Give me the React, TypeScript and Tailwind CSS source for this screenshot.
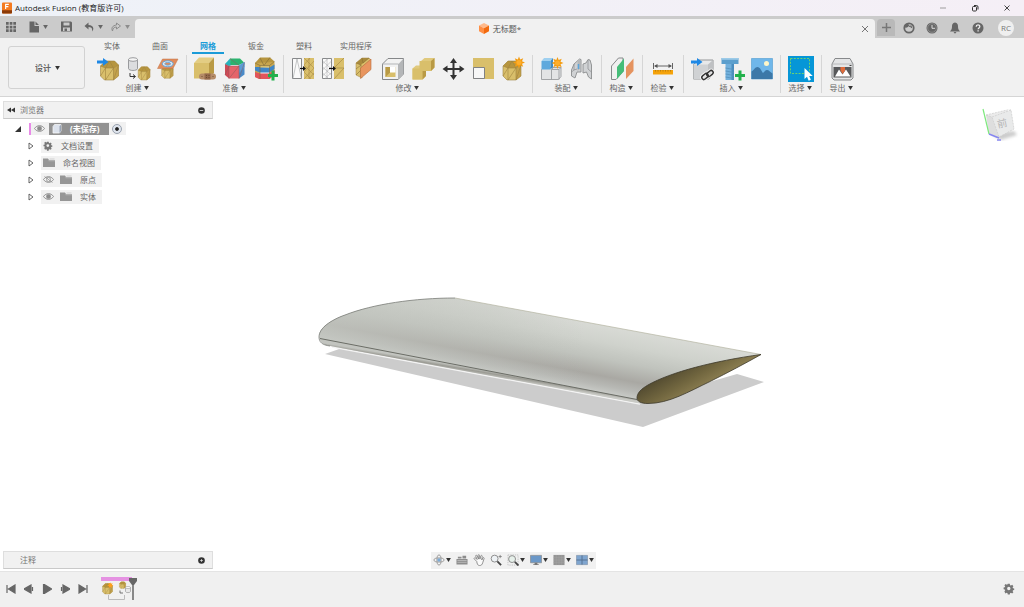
import type { ReactNode } from 'react';

const GOLD = '#d9bf6b';
const GOLD_DARK = '#b99a45';
const GOLD_LINE = '#a08340';

function Caret({ className = '' }: { className?: string }) {
  return (
    <svg viewBox="0 0 6 5" className={`h-1 w-[5px] shrink-0 ${className}`} aria-hidden="true">
      <path d="M0 0h6L3 5z" fill="currentColor" />
    </svg>
  );
}

function Icon({ children, className = 'size-[26px]' }: { children: ReactNode; className?: string }) {
  return (
    <svg viewBox="0 0 26 26" className={`block shrink-0 ${className}`} fill="none" aria-hidden="true">
      {children}
    </svg>
  );
}

/* faceted solid, drawn in a 20x20 box */
function Mesh({ t = '' }: { t?: string }) {
  return (
    <g transform={t} strokeLinejoin="round">
      <path d="M1 6 6 1h9l4 4v11l-5 4H5l-4-4z" fill={GOLD} />
      <path d="M1 6 6 1h9l4 4-5 3H6z" fill="#b6953f" />
      <path d="m14 8 5-3v11l-5 4z" fill="#c3a24c" />
      <path
        d="M1 6 6 1h9l4 4v11l-5 4H5l-4-4zM1 6l5 2h8l5-3M6 8v12M14 8v12M6 8 10 1l4 7M1 16l5-8M6 20l8-12M14 20l5-15"
        stroke={GOLD_LINE}
        strokeWidth=".6"
      />
    </g>
  );
}

function Star({ x, y }: { x: number; y: number }) {
  return (
    <g transform={`translate(${x} ${y})`}>
      <path
        d="m0-6 1.200 3 3-1.200L3-1.200 6 0 3 1.200l1.200 3-3-1.200L0 6l-1.200-3-3 1.200 1.200-3L-6 0l3-1.200-1.200-3 3 1.200z"
        fill="#f39c12"
      />
      <circle r="2.500" fill="#ffae2b" />
    </g>
  );
}

const BlueArrow = () => <path d="M2 4.500h6V2l5.500 4L8 10V7.500H2z" fill="#1e88e5" />;
const GreenPlus = () => <path d="M19.500 14.500h3v3.500H26v3h-3.500v3.500h-3V21H16v-3h3.500z" fill="#22b14c" />;

const createIcons = [
  {
    name: '插入网格',
    art: (
      <>
        <Mesh t="translate(4.500 4)" />
        <BlueArrow />
      </>
    ),
  },
  {
    name: '曲面细分',
    art: (
      <>
        <path d="M3.500 3.500v9c0 2.600 9 2.600 9 0v-9" fill="#dcdddf" stroke="#858789" strokeWidth=".8" />
        <ellipse cx="8" cy="3.500" rx="4.500" ry="1.800" fill="#f5f5f5" stroke="#858789" strokeWidth=".8" />
        <path d="M5 17v3.500h5M8 18.500l2.500 2L8 22.500" stroke="#333" strokeWidth="1" />
        <Mesh t="translate(12.500 10) scale(.66 .7)" />
      </>
    ),
  },
  {
    name: '网格截面草图',
    art: (
      <>
        <Mesh t="translate(6 9.500) scale(.64)" />
        <path d="m2.500 12.500 5-9.500h15.500l-5 9.500z" fill="#e08c5c" stroke="#c27244" strokeWidth=".5" />
        <ellipse cx="12.700" cy="7.800" rx="5.500" ry="3" fill="#dfe9f2" stroke="#5fa5dc" strokeWidth="1" />
        <ellipse cx="12.700" cy="7.800" rx="3" ry="1.400" fill="#e08c5c" stroke="#5fa5dc" strokeWidth=".8" />
      </>
    ),
  },
];

const prepareIcons = [
  {
    name: '修复',
    art: (
      <>
        <path d="M2 7h15v15.500H2z" fill={GOLD} />
        <path d="m2 7 5-5.500h15L17 7z" fill="#e3cd83" />
        <path d="m17 7 5-5.500V17l-5 5.500z" fill={GOLD_DARK} />
        <rect x="7" y="17.500" width="17" height="6" rx="3" fill="#b58c68" />
        <rect x="12.500" y="17.500" width="6" height="6" fill="#94694a" />
        <path d="M9.500 20.500h1M20.500 20.500h1M14 19.500h1M16.500 19.500h1M14 21.500h1M16.500 21.500h1" stroke="#5f432a" strokeWidth=".8" />
      </>
    ),
  },
  {
    name: '生成面组',
    art: (
      <>
        <path d="M3 8v11l4 3.500V10z" fill="#cf4a56" />
        <path d="M3 8 8 2.500 9.500 9 7 10z" fill="#27b3bd" />
        <path d="M8 2.500h10l4 4-5 2.500H8.500z" fill="#2bb36f" />
        <path d="M7 10h10v12.500H7z" fill="#e5646a" />
        <path d="m17 9.500 5.500-3.500v12.500l-5.500 4z" fill="#4a8ac8" />
        <path d="m17 9.500 5.500-3.500v5L17 17z" fill="#5b9bd5" />
        <path d="m7 22.500 10-12.500M3 19l4-9M8 2.500l9 7M17 22.500l5.500-16M3 8l4 2h10v12.500M7 10v12.500" stroke="#8a5a5c" strokeWidth=".5" />
      </>
    ),
  },
  {
    name: '合并面组',
    art: (
      <>
        <path d="m3 7 5-5.500h10l4.500 4-5 4H8z" fill="#b6953f" />
        <path d="M3 7v14l5 2V9.500h9.500v13.500l5-4v-13z" fill="#c8a64e" />
        <path d="M3 11h5l9.500.5 5-3v4.500l-5 3.500H8l-5-2z" fill="#3f86c7" />
        <path d="m3 16 5 1.500h9.500l5-3.500v4.500l-5 4.500H7l-4-2z" fill="#e2555c" />
        <path d="M8 9.500h9.500v2H8z" fill={GOLD} />
        <path d="m3 7 5 2.500h9.500l5-4M8 2l4 7.500 6-8M8 9.500V23M17.500 9.500V22" stroke="#806a35" strokeWidth=".6" />
        <GreenPlus />
      </>
    ),
  },
];

const modifyIcons = [
  {
    name: '重新划分网格',
    art: (
      <>
        <path d="M2.500 2.500h9v20h-9z" fill="#fafafa" stroke="#87898b" strokeWidth="1" />
        <path d="M3 22.500 7 3l4.500 19.500" stroke="#a0a2a4" strokeWidth=".6" />
        <path d="M14 2h10v21H14z" fill={GOLD} />
        <path d="M14 9 20 2M14 16 24 5M14 23l10-11M19 23l5-6M14 2l10 10M14 9l10 10M14 16l7 7M19 2v21" stroke={GOLD_LINE} strokeWidth=".5" />
        <path d="M10 12.500h4" stroke="#111" strokeWidth="1.200" />
        <path d="m13 10 3 2.500L13 15z" fill="#111" />
      </>
    ),
  },
  {
    name: '简化',
    art: (
      <>
        <path d="M2.500 2.500h9v20h-9z" fill="#fafafa" stroke="#87898b" strokeWidth="1" />
        <path d="M2.500 8 8 2.500M2.500 14l9-9M2.500 20l9-9M5 22.500l6.500-6M2.500 5l9 8M2.500 11l9 8M2.500 17l6 5.500M7 2.500v20" stroke="#a0a2a4" strokeWidth=".5" />
        <path d="M14 2h10v21H14z" fill={GOLD} />
        <path d="M14 12 24 2M14 12h10L14 23" stroke={GOLD_LINE} strokeWidth=".6" />
        <path d="M9 12.500h5" stroke="#111" strokeWidth="1.200" />
        <path d="m13 10 3 2.500L13 15z" fill="#111" />
      </>
    ),
  },
  {
    name: '平面剪切',
    art: (
      <>
        <path d="m6 7 6-5h7l2 2-9 7v11l-6-3z" fill={GOLD} stroke={GOLD_LINE} strokeWidth=".5" />
        <path d="m6 7 6-5h7l-8 7z" fill="#a88a3d" />
        <path d="m6 7 5 2v12M6 13l5-4M6 19l5-5M12 2l1 5 6-5" stroke="#8a7136" strokeWidth=".6" />
        <path d="m10.500 12 10.500-9v10.500l-10.500 9z" fill="#e8955f" stroke="#b96d3e" strokeWidth=".6" />
      </>
    ),
  },
  {
    name: '抽壳',
    art: (
      <>
        <path d="M2.500 8 8 2.500h15.500V18L18 23.500H2.500z" fill="#f2f2f2" stroke="#858789" strokeWidth="1" />
        <path d="m18.500 8 5-5.500V18l-5 5.500z" fill="#b4b6b8" />
        <path d="M2.500 8h16v15.500" stroke="#b3b5b7" strokeWidth="1" />
        <path d="M5.500 11h10v10h-10z" fill={GOLD} />
        <path d="M10 11h5.500v5.500H10z" fill="#fff" />
        <path d="M5.500 11H10v5.500L5.500 21z" fill={GOLD_DARK} />
      </>
    ),
  },
  {
    name: '合并',
    art: (
      <>
        <path d="M2.500 12.500 6 9.500h5V5l3.500-3h10v9.500L21 15h-5v5l-3.500 3.500h-10z" fill="#e0c97d" />
        <path d="M2.500 12.500h7V5H21v10h-8.500v8.500h-10z" fill={GOLD} />
        <path d="m21 5 3.500-3v9.500L21 15zM12.500 15H16v5l-3.500 3.500z" fill={GOLD_DARK} />
      </>
    ),
  },
  {
    name: '移动/复制',
    art: (
      <>
        <path d="M13.500 5v16M5 13h17" stroke="#333" strokeWidth="2" />
        <path d="m13.500 2 3.500 5h-7zM13.500 24l3.500-5h-7zM2.500 13l5-3.500v7zM24.500 13l-5-3.500v7z" fill="#333" />
      </>
    ),
  },
  {
    name: '缩放',
    art: (
      <>
        <path d="M3 2h21v21H3z" fill={GOLD} />
        <path d="M3.500 11.500h11v11h-11z" fill="#f7f7f7" stroke="#808285" strokeWidth="1" />
      </>
    ),
  },
  {
    name: '转换网格',
    art: (
      <>
        <Mesh t="translate(2 4)" />
        <Star x={19} y={6.500} />
      </>
    ),
  },
];

const assembleIcons = [
  {
    name: '新建零部件',
    art: (
      <>
        <path d="m2.500 13.500 2-2H22v9L19.500 23.500h-17z" fill="#e3e4e5" stroke="#9b9d9f" strokeWidth=".9" />
        <path d="M12.500 13.500h7.500v10M12.500 13.500v10M20 13.500l2-2M12.500 13.500l2-2" stroke="#9b9d9f" strokeWidth=".9" />
        <path d="M2.500 5h9v8.500h-9z" fill="#5fa9dd" />
        <path d="m2.500 5 2.500-3h9l-2.500 3z" fill="#9fd0f0" />
        <path d="m11.500 5 2.500-3v9l-2.500 2.500z" fill="#3f8bc4" />
        <Star x={18.500} y={7} />
      </>
    ),
  },
  {
    name: '联接',
    art: (
      <>
        <path d="M2.500 14 5 8l5.500-5 1.500.5V16h-4L6 22l-3.500-2z" fill="#d0d2d4" stroke="#8b8d8f" strokeWidth=".9" />
        <path d="M5 8v6l-2.500 2M5 14l3-1" stroke="#8b8d8f" strokeWidth=".7" />
        <path d="M8.500 5.500V15l2.500-2V3.500z" fill="#b5b8ba" />
        <path d="m14 8 3-1 2-3.500 2 .5 1.500 5v14l-3-2-2-5-3.500 1z" fill="#d0d2d4" stroke="#8b8d8f" strokeWidth=".9" />
        <path d="M19 4v9l3.500 3" stroke="#8b8d8f" strokeWidth=".7" />
        <path d="M9.500 8v5" stroke="#5aa6dd" strokeWidth="1.500" />
      </>
    ),
  },
];

const constructIcons = [
  {
    name: '偏移平面',
    art: (
      <>
        <path d="m2.500 10 7-8H14v13.500L7 23.500H2.500z" fill="#f0f0f0" stroke="#87898b" strokeWidth="1" />
        <path d="m8 11 7-8.500v12.500l-7 8z" fill="#45bd78" />
        <path d="m17 11 7.500-8.500v12.500L17 23z" fill="#e5935f" />
      </>
    ),
  },
];

const inspectIcons = [
  {
    name: '测量',
    art: (
      <>
        <path d="M3.500 7v6M22.500 7v6M5 10h16" stroke="#555" strokeWidth=".9" />
        <path d="m4 10 3.500-2v4zM22 10l-3.500-2v4z" fill="#555" />
        <path d="M3 14h20v4.500H3z" fill="#f5a30a" />
        <path d="M5.500 14v1.500M8 14v1.500M10.500 14v1.500M13 14v1.500M15.500 14v1.500M18 14v1.500M20.500 14v1.500" stroke="#a8700d" strokeWidth=".7" />
      </>
    ),
  },
];

const insertIcons = [
  {
    name: '插入衍生',
    art: (
      <>
        <path d="m4.500 8.500 5-4.500H24v14l-4 5H4.500z" fill="#e8e9ea" stroke="#8b8d8f" strokeWidth=".9" />
        <path d="M4.500 8.500H19V23H4.500z" fill="#d0d2d4" />
        <path d="m19 8.500 5-4.500v14l-5 5z" fill="#bfc1c3" />
        <BlueArrow />
        <g stroke="#f1f1f1" strokeWidth="3.500">
          <rect x="12.500" y="18.500" width="7" height="4" rx="2" transform="rotate(-40 16 20.500)" />
          <rect x="17.500" y="15.500" width="7" height="4" rx="2" transform="rotate(-40 21 17.500)" />
        </g>
        <g stroke="#333" strokeWidth="1.500">
          <rect x="12.500" y="18.500" width="7" height="4" rx="2" transform="rotate(-40 16 20.500)" />
          <rect x="17.500" y="15.500" width="7" height="4" rx="2" transform="rotate(-40 21 17.500)" />
        </g>
      </>
    ),
  },
  {
    name: '插入紧固件',
    art: (
      <>
        <path d="M2.500 2h17v6h-17z" fill="#5c9fcd" />
        <path d="M2.500 2h17v1.800h-17z" fill="#9ccbe8" />
        <path d="M6.500 8H15v16H6.500z" fill="#72b0dc" />
        <path d="M12.500 8H15v16h-2.500z" fill="#4a8dbf" />
        <path d="m6.500 12 8.500 1.500M6.500 15l8.500 1.500M6.500 18l8.500 1.500M6.500 21l8.500 1.500" stroke="#5592bd" strokeWidth=".8" />
        <GreenPlus />
      </>
    ),
  },
  {
    name: '贴图',
    art: (
      <>
        <path d="M2.500 2.500h21v20.500h-21z" fill="#6fb7ea" stroke="#4d9bd0" strokeWidth=".6" />
        <circle cx="17.500" cy="7.500" r="2.500" fill="#fdf6c9" />
        <path d="M2.500 15.500C5 14 6 11 8.500 11s4 4 5.500 6c1.500-1 2-3 4-3s3 2 5.500 3.500V23h-21z" fill="#3c78a8" />
      </>
    ),
  },
];

const selectIcons = [
  {
    name: '选择',
    art: (
      <>
        <path d="M0 0h26v26H0z" fill="#0696d7" />
        <path d="M2.500 2.500h19v15h-19z" stroke="#6fd26f" strokeWidth="1" strokeDasharray="2 1.300" />
        <path d="M16.500 12v11l2.500-2.300 1.700 4 2.200-1-1.700-3.800h3.500z" fill="#fff" />
      </>
    ),
  },
];

const exportIcons = [
  {
    name: '3D 打印',
    art: (
      <>
        <path d="m3 8 3-5.500h15L24 8v14l-2 2H5l-2-2z" fill="#e4e5e6" stroke="#87898b" strokeWidth="1" />
        <path d="M3 8h21" stroke="#acaeb0" strokeWidth=".8" />
        <path d="M4.500 11h18v10.500h-18z" fill="#58595b" />
        <path d="m6 20.500 4-7 3.500 5 3.500-5 4.500 7z" fill="#fff" />
        <path d="M11.500 11h4.500v3.500L13.700 18l-2.200-3.500z" fill="#df6c3c" />
        <path d="M20.500 9.500h2" stroke="#333" strokeWidth=".9" />
      </>
    ),
  },
];

const groups = [
  { label: '创建', icons: createIcons },
  { label: '准备', icons: prepareIcons },
  { label: '修改', icons: modifyIcons },
  { label: '装配', icons: assembleIcons },
  { label: '构造', icons: constructIcons },
  { label: '检验', icons: inspectIcons },
  { label: '插入', icons: insertIcons },
  { label: '选择', icons: selectIcons },
  { label: '导出', icons: exportIcons },
];

const tabs = ['实体', '曲面', '网格', '钣金', '塑料', '实用程序'];

const gearPath =
  'M10.500 2h5l.7 3.400 2.300 1 3-1.900 3 3.500-1.900 2.800.9 2.200 3 .5v4l-3 .6-.9 2.300 1.900 2.900-3.200 3.200-2.900-1.900-2.300.9-.6 3.500h-5l-.7-3.500-2.300-.9-2.900 1.900L2 21.300l1.900-2.900-1-2.300L0 15.500v-4l2.900-.6 1-2.300L2 5.700 5.200 2.500l2.900 1.900 2-1z M13 9.500a4.200 4.200 0 1 0 0 8.400 4.200 4.200 0 0 0 0-8.400z';

function Gear({ className }: { className?: string }) {
  return (
    <svg viewBox="-1 0 29 30" className={className} fill="currentColor" fillRule="evenodd" aria-hidden="true">
      <path d={gearPath} />
    </svg>
  );
}

function Eye({ off = false }: { off?: boolean }) {
  return (
    <svg viewBox="0 0 22 14" className="h-[7px] w-[11px] shrink-0" fill="none" aria-hidden="true">
      <path d="M1 7c5-7.500 15-7.500 20 0-5 7.500-15 7.500-20 0z" stroke="#8c8c8c" strokeWidth="2" />
      <circle cx="11" cy="7" r="4" fill={off ? 'none' : '#8c8c8c'} stroke="#8c8c8c" strokeWidth="1.500" />
      {off && <path d="m3 1 16 12" stroke="#8c8c8c" strokeWidth="1.500" />}
    </svg>
  );
}

function Folder() {
  return (
    <svg viewBox="0 0 24 18" className="h-[9px] w-3 shrink-0" aria-hidden="true">
      <path d="M0 1h10l2 3h12v14H0z" fill="#969696" />
      <path d="M11 5.500h13M13 2h10" stroke="#c4c4c4" strokeWidth="1.500" />
    </svg>
  );
}

function TitleBar() {
  return (
    <header className="flex h-4 shrink-0 items-center bg-gradient-to-r from-[#eef2f8] to-[#f5eff6] text-[#222]">
      <svg viewBox="0 0 22 24" className="ml-[2px] h-3 w-[10px]" aria-hidden="true">
        <rect width="22" height="24" rx="2" fill="#f47a20" />
        <path d="M0 17h22v5a2 2 0 0 1-2 2H2a2 2 0 0 1-2-2z" fill="#8a3a08" />
        <path d="M8 14V4h7M8 9h6" fill="none" stroke="#fff" strokeWidth="2.500" />
      </svg>
      <h1 className="ml-[3px] text-[8px]">Autodesk Fusion (教育版许可)</h1>
      <div className="ml-auto flex items-center pr-[13px] text-[#333]">
        <button aria-label="最小化" className="mr-6">
          <svg viewBox="0 0 8 8" className="size-2"><path d="M1 4h6" stroke="#888" strokeWidth=".8" /></svg>
        </button>
        <button aria-label="还原" className="mr-6">
          <svg viewBox="0 0 8 8" className="size-2" fill="none" stroke="currentColor">
            <rect x="1.500" y="2.500" width="4" height="4.500" rx="1" />
            <path d="M3 1.500h2.500a1.500 1.500 0 0 1 1.500 1.500v2.500" />
          </svg>
        </button>
        <button aria-label="关闭窗口">
          <svg viewBox="0 0 8 8" className="size-2"><path d="m1.500 1.500 5 5m0-5-5 5" stroke="currentColor" strokeWidth=".9" /></svg>
        </button>
      </div>
    </header>
  );
}

function DocumentBar() {
  return (
    <div className="flex h-[22px] shrink-0 bg-[#cbcbcb] pt-[3px] text-[#666]">
      <div className="flex w-[135px] shrink-0 items-center pb-1 pl-1.5">
        <button aria-label="数据面板">
          <svg viewBox="0 0 10 10" className="size-[10px]" fill="currentColor">
            <path d="M0 0h2.700v2.700H0zM3.700 0h2.700v2.700H3.700zM7.300 0H10v2.700H7.300zM0 3.700h2.700v2.700H0zM3.700 3.700h2.700v2.700H3.700zM7.300 3.700H10v2.700H7.300zM0 7.300h2.700V10H0zM3.700 7.300h2.700V10H3.700zM7.300 7.300H10V10H7.300z" />
          </svg>
        </button>
        <button aria-label="文件" className="ml-[13px] flex items-center gap-1">
          <svg viewBox="0 0 10 12" className="h-3 w-[10px]" fill="currentColor"><path d="M.5.500h5V5H10v6.500H.500zM6.500.500 10 4H6.500z" /></svg>
          <Caret />
        </button>
        <button aria-label="保存" className="ml-[13px]">
          <svg viewBox="0 0 11 11" className="size-[11px]" fill="currentColor" fillRule="evenodd">
            <path d="M0 .500h10L11 1.500v9H0zM2.500 1.500v3h6v-3zM2 6.500V10h7V6.500zM3.500 7.500H6V10H3.500z" />
          </svg>
        </button>
        <button aria-label="撤消" className="ml-3 flex items-center gap-1">
          <svg viewBox="0 0 10 10" className="size-[10px]"><path d="M4.500.500.500 4l4 3.500V5c3 0 4 1 3.500 4.500C11 6 8.500 3 4.500 3z" fill="currentColor" /></svg>
          <Caret />
        </button>
        <button aria-label="重做" className="ml-2 flex items-center gap-1 text-[#8d8d8d]">
          <svg viewBox="0 0 10 10" className="size-[10px]"><path d="m5.500 1 4 3-4 3V5C3 5 2 6 1.500 9 0 6 1.500 3.500 5.500 3z" fill="none" stroke="currentColor" /></svg>
          <Caret />
        </button>
      </div>
      <div className="flex flex-1 items-center rounded-t bg-[#f1f1f1]">
        <div className="flex flex-1 items-center justify-center gap-1 pl-1 text-[8px] text-[#555]">
          <svg viewBox="0 0 20 22" className="h-[11px] w-[10px]" aria-hidden="true">
            <path d="m10 0 10 5-10 5.500L0 5z" fill="#ffb98a" />
            <path d="m0 5 10 5.500V22L0 16.500z" fill="#ff8f45" />
            <path d="m20 5-10 5.500V22l10-5.500z" fill="#f26a0e" />
          </svg>
          <span>无标题*</span>
        </div>
        <button aria-label="关闭文档" className="mr-1.5">
          <svg viewBox="0 0 8 8" className="size-2"><path d="m1 1 6 6m0-6-6 6" stroke="currentColor" strokeWidth=".9" /></svg>
        </button>
      </div>
      <div className="flex w-[149px] shrink-0 items-center pb-0.5">
        <button aria-label="新建设计" className="ml-0.5 flex h-full w-[18px] items-center justify-center rounded-t bg-[#b9b9b9]">
          <svg viewBox="0 0 9 9" className="size-[9px]"><path d="M4.500 0v9M0 4.500h9" stroke="#777" strokeWidth="1.500" /></svg>
        </button>
        <button aria-label="扩展" className="ml-2">
          <svg viewBox="0 0 12 12" className="size-3" fill="none">
            <circle cx="6" cy="6" r="4.700" stroke="currentColor" strokeWidth="1.800" />
            <path d="M1.500 3 4 1.500 6.500 3 5 5 2.500 6z" fill="currentColor" />
            <path d="m6 4.500 2-.5.5 2" stroke="currentColor" strokeWidth="1.200" />
          </svg>
        </button>
        <button aria-label="作业状态" className="ml-[11px]">
          <svg viewBox="0 0 12 12" className="size-3" fill="none">
            <circle cx="6" cy="6" r="5.500" fill="currentColor" />
            <circle cx="6" cy="6" r="4.300" stroke="#aaa" strokeWidth=".5" />
            <path d="M6 3v3.300h3" stroke="#ddd" strokeWidth="1" />
          </svg>
        </button>
        <button aria-label="通知" className="ml-[11px]">
          <svg viewBox="0 0 12 12" className="size-3" fill="currentColor"><path d="M6 .500c-2.500.5-3 2-3 4 0 2.500-.5 3-2 5h10c-1.500-2-2-2.500-2-5 0-2-.5-3.500-3-4zM4.500 10h3L6 11.700z" /></svg>
        </button>
        <button aria-label="帮助" className="ml-[11px]">
          <svg viewBox="0 0 12 12" className="size-3" fill="none">
            <circle cx="6" cy="6" r="5.500" fill="currentColor" />
            <path d="M4.200 4.700c0-2.400 3.600-2.300 3.600-.2 0 1.400-1.700 1.400-1.700 2.800M6.100 8.300v1.300" stroke="#eee" strokeWidth="1.300" />
          </svg>
        </button>
        <button className="ml-[14px] size-4 rounded-full bg-[#efefef] text-[8px] leading-4 text-[#777]">RC</button>
      </div>
    </div>
  );
}

function Ribbon() {
  return (
    <div className="flex shrink-0 border-b border-[#d5d5d5] bg-[#f1f1f1]">
      <div className="relative mt-2 mb-1.5 ml-2 flex h-[43px] w-[77px] shrink-0 items-center rounded-[3px] border border-[#d2d2d2]">
        <select
          aria-label="工作空间"
          className="size-full appearance-none bg-transparent pl-[26px] text-[8px] font-bold text-[#666] outline-none"
        >
          <option>设计</option>
        </select>
        <Caret className="pointer-events-none absolute right-6 text-[#333]" />
      </div>
      <div className="ml-2 flex flex-1 flex-col">
        <div role="tablist" className="flex h-4 gap-4 pt-0.5 pl-[3px] text-[8px] text-[#666]">
          {tabs.map((tab) => (
            <button
              key={tab}
              role="tab"
              aria-selected={tab === '网格'}
              className={`min-w-8 border-b-2 leading-3 ${
                tab === '网格' ? 'border-[#1b9bd8] font-bold text-[#1b9bd8]' : 'border-transparent'
              } ${tab.length > 2 ? 'px-1' : ''}`}
            >
              {tab}
            </button>
          ))}
        </div>
        <div className="flex pt-px">
          {groups.map(({ label, icons }, i) => (
            <section
              key={label}
              aria-label={label}
              className={`mb-[3px] flex flex-col items-center ${
                i === 0 ? 'pr-[3px]' : icons.length === 1 ? 'px-[5px]' : icons.length === 3 ? 'px-[3px]' : 'px-1'
              } ${i < groups.length - 1 ? 'border-r border-[#d6d6d6]' : ''}`}
            >
              <div className="flex">
                {icons.map((icon) => (
                  <button key={icon.name} aria-label={icon.name} className="flex h-7 w-[30px] items-center justify-center">
                    <Icon>{icon.art}</Icon>
                  </button>
                ))}
              </div>
              <button className="flex items-center gap-0.5 pr-0.5 text-[8px] leading-[10px] text-[#666]">
                {label}
                <Caret className="text-[#333]" />
              </button>
            </section>
          ))}
        </div>
      </div>
    </div>
  );
}

function Panel({ title, action, open }: { title: string; action: string; open?: boolean }) {
  return (
    <div className="flex h-[18px] w-[210px] items-center border border-[#dedede] border-b-[#c9c9c9] bg-[#f1f1f1] text-[8px] text-[#777]">
      <div className="flex w-4 items-center pl-[3px]">
        {open && (
          <button aria-label="折叠浏览器">
            <svg viewBox="0 0 8 6" className="h-1.5 w-2" fill="#333"><path d="M4 .500v5L0 3zM8 .500v5L4 3z" /></svg>
          </button>
        )}
      </div>
      <h2>{title}</h2>
      <button aria-label={action} className="ml-auto mr-[7px]">
        <svg viewBox="0 0 8 8" className="size-[7px]">
          <circle cx="4" cy="4" r="3.800" fill="#333" />
          <path d={open ? 'M2 4h4' : 'M2.500 4h3M4 2.500v3'} stroke="#ddd" strokeWidth="1" />
        </svg>
      </button>
    </div>
  );
}

const nodes = [
  { label: '文档设置', icon: <Gear className="size-[10px] shrink-0 text-[#777]" />, gap: 'ml-2' },
  { label: '命名视图', icon: <Folder />, gap: 'ml-2' },
  { label: '原点', icon: <Folder />, eye: 'off', gap: 'ml-2' },
  { label: '实体', icon: <Folder />, eye: 'on', gap: 'ml-2' },
];

function Browser() {
  return (
    <aside className="text-[8px] text-[#666]">
      <Panel title="浏览器" action="收起浏览器" open />
      <ul className="mt-px">
        <li className="flex h-[17px] items-center">
          <button aria-label="收起文档" className="ml-3">
            <svg viewBox="0 0 6 6" className="size-1.5"><path d="M6 0v6H0z" fill="#333" /></svg>
          </button>
          <span className="ml-2 h-3 w-0.5 bg-[#e88be8]" />
          <div className="flex h-[13px] items-center bg-[#f1f1f1]">
            <button aria-label="文档可见性" className="ml-[3px] mr-1"><Eye /></button>
            <div className="flex h-3 w-[60px] items-center bg-[#929292] font-bold text-white">
              <svg viewBox="0 0 20 20" className="ml-[3px] size-[10px]" aria-hidden="true">
                <path d="m2 5 3-4h13v13l-3 4H2z" fill="#dce2ec" stroke="#f8f8f8" strokeWidth="1.500" />
                <path d="m15 5 3-4v13l-3 4z" fill="#9ba6b8" />
              </svg>
              <span className="ml-2">(未保存)</span>
            </div>
            <input
              type="radio"
              aria-label="激活零部件"
              defaultChecked
              className="ml-[3px] mr-1 size-[10px] appearance-none rounded-full border border-[#9aa2ae] bg-[#dfe5ee] checked:bg-[radial-gradient(circle,#222_25%,#dfe5ee_40%)]"
            />
          </div>
        </li>
        {nodes.map((n) => (
          <li key={n.label} className="flex h-[17px] items-center">
            <button aria-label={`展开${n.label}`} className="ml-[25px]">
              <svg viewBox="0 0 6 8" className="h-2 w-1.5"><path d="M1 1v6l4-3z" fill="#fff" stroke="#555" strokeWidth=".9" /></svg>
            </button>
            <div className="ml-[7px] flex h-[14px] items-center bg-[#f1f1f1] pl-0.5 pr-1.5">
              {n.eye && <button aria-label={`${n.label}可见性`} className="mr-1.5"><Eye off={n.eye === 'off'} /></button>}
              {n.icon}
              <span className={n.gap}>{n.label}</span>
            </div>
          </li>
        ))}
      </ul>
    </aside>
  );
}

function Wing() {
  return (
    <svg viewBox="0 97 1024 474" className="absolute inset-0 size-full" role="img" aria-label="机翼模型">
      <defs>
        <linearGradient id="skin" gradientUnits="userSpaceOnUse" x1="455" y1="298" x2="443" y2="362">
          <stop offset="0" stopColor="#d8dad5" />
          <stop offset=".25" stopColor="#cfd2cc" />
          <stop offset=".5" stopColor="#c0c3bd" />
          <stop offset=".76" stopColor="#a9a8a3" />
          <stop offset=".9" stopColor="#b7b8b4" />
          <stop offset="1" stopColor="#c6c8c4" />
        </linearGradient>
        <linearGradient id="tip" x1="0" x2="1">
          <stop offset="0" stopColor="#c5c8c2" stopOpacity=".7" />
          <stop offset=".4" stopColor="#c0c3bd" stopOpacity=".3" />
          <stop offset=".6" stopColor="#c0c3bd" stopOpacity="0" />
        </linearGradient>
        <linearGradient id="lip" gradientUnits="userSpaceOnUse" x1="480" y1="369" x2="479" y2="375">
          <stop offset="0" stopColor="#c2c4bf" />
          <stop offset=".45" stopColor="#9b9b94" />
          <stop offset="1" stopColor="#c9cac5" />
        </linearGradient>
        <linearGradient id="inside" gradientUnits="userSpaceOnUse" x1="672" y1="371" x2="688" y2="399">
          <stop offset="0" stopColor="#544c31" />
          <stop offset=".5" stopColor="#71663f" />
          <stop offset="1" stopColor="#8f8153" />
        </linearGradient>
      </defs>
      <path d="m325 354 17-6 298 54 97-28 27 8-121 45z" fill="#ccc" />
      <path d="m332 347 308 57" stroke="#f4f4f4" strokeWidth="1.500" />
      <path d="M319 337c1 5 4 8 11 9l310 57.500-3-5z" fill="url(#lip)" />
      <path d="M320 338.500C316 330 330 320 345 315c28-11 70-17 110-17l306 56.500c-47 7-90 18-113 31-8 4-11 9-11 14z" fill="url(#skin)" />
      <path d="M320 338.500C316 330 330 320 345 315c28-11 70-17 110-17l306 56.500c-47 7-90 18-113 31-8 4-11 9-11 14z" fill="url(#tip)" />
      <path d="m455 298 306 56.500" stroke="#b5b4a2" strokeWidth=".7" />
      <path d="M330 346c-8-1-11-4-11-9 0-9 12-17 26-22 28-11 70-17 110-17" fill="none" stroke="#7b7d78" strokeWidth=".8" />
      <path d="m320 338.500 317 61" stroke="#6b6d66" strokeWidth="1" />
      <path d="M637 398c0-5 4-9 11-13 23-13 66-24 113-30.500-16 9-33 18-51 27-21 10-41 22-62 22-7 0-11-2-11-5.500z" fill="url(#inside)" stroke="#3c382b" strokeWidth=".8" />
    </svg>
  );
}

function ViewCube() {
  return (
    <svg viewBox="0 0 54 50" className="absolute right-0 top-0 h-[50px] w-[54px]" role="img" aria-label="视图方位：前">
      <defs>
        <filter id="soft"><feGaussianBlur stdDeviation="1.500" /></filter>
      </defs>
      <path d="m21 37 23-3 3 4-16 5z" fill="#ccc" filter="url(#soft)" />
      <path d="m16 18 21-5 6 17-21 9z" fill="#ebebeb" />
      <path d="m16 18 6 2 7 20-10-3z" fill="#dedede" />
      <path d="m22 20 19-7 3 19-15 8z" fill="#e9eaea" stroke="#ccc" strokeWidth=".7" strokeDasharray="2 1" />
      <path d="m16 18 6 2M16 18l21-5 4 0" stroke="#ccc" strokeWidth=".7" fill="none" strokeDasharray="2 1" />
      <text x="0" y="0" transform="translate(28 31) rotate(-12)" fontSize="10" fill="#b5b5b5">前</text>
      <path d="m13 12 6 25" stroke="#7de87d" strokeWidth="1.200" />
      <path d="m19 37 10 4M27 43h4" stroke="#8686f0" strokeWidth="1.400" />
    </svg>
  );
}

const navTools = [
  {
    name: '动态观察',
    menu: true,
    art: (
      <g stroke="#8a8a8a" strokeWidth="1.700">
        <ellipse cx="13" cy="13" rx="11" ry="4.500" />
        <ellipse cx="13" cy="13" rx="4.500" ry="11" />
        <path d="M13 9v8M9 13h8" stroke="#4f8fcb" strokeWidth="2" />
      </g>
    ),
  },
  {
    name: '观察方向',
    art: (
      <g fill="#8d8d8d">
        <path d="M1 11h24v12H1zM4 6h8v4H4zM14 4h8v6h-8z" />
        <path d="M3 14h20M3 18h20" stroke="#ccc" strokeWidth="1.500" />
      </g>
    ),
  },
  {
    name: '平移',
    art: (
      <path
        d="M8 16 3 11c-2-2 1-4 3-2l3 3L6 5c-1-3 2-3 3-1l3 7-1-8c0-2 3-2 3 0l1 8 2-7c1-2 3-1 3 1l-1 8 2-4c1-2 4-1 3 1l-3 9c-1 4-3 6-7 6-4 0-5-4-6-9z"
        fill="#fafafa"
        stroke="#777"
        strokeWidth="1.700"
      />
    ),
  },
  {
    name: '缩放视图',
    art: (
      <>
        <circle cx="10" cy="10" r="7.500" fill="#eef2f5" stroke="#888" strokeWidth="2" />
        <path d="m16 16 8 8" stroke="#444" strokeWidth="4" />
        <path d="M22 2v7M18.500 5.500h7" stroke="#777" strokeWidth="1.700" />
      </>
    ),
  },
  {
    name: '窗口缩放',
    menu: true,
    art: (
      <>
        <path d="M2 2h22v22H2z" stroke="#999" strokeDasharray="3 2" />
        <circle cx="11" cy="11" r="7.500" fill="#e6f0ea" stroke="#888" strokeWidth="2" />
        <path d="m17 17 8 8" stroke="#444" strokeWidth="4" />
      </>
    ),
  },
  {
    name: '显示设置',
    menu: true,
    art: (
      <>
        <path d="M1 3h24v16H1z" fill="#6b98c8" stroke="#8a8a8a" strokeWidth="1.500" />
        <path d="M10 19h6v3h3v2H7v-2h3z" fill="#777" />
      </>
    ),
  },
  {
    name: '栅格和捕捉',
    menu: true,
    art: (
      <>
        <path d="M1 2h24v22H1z" fill="#959595" />
        <path d="M1 8h24M1 13h24M1 18h24M7 2v22M13 2v22M19 2v22" stroke="#a8a8a8" />
      </>
    ),
  },
  {
    name: '视口',
    menu: true,
    art: (
      <>
        <path d="M1 3h24v20H1z" fill="#7fa5cf" stroke="#6a7d94" />
        <path d="M13 3v20M1 13h24" stroke="#54708f" strokeWidth="2" />
      </>
    ),
  },
];

function NavBar() {
  return (
    <div role="toolbar" aria-label="导航" className="flex h-[17px] items-center gap-[5px] bg-[#f1f1f1] px-0.5">
      {navTools.map((tool) => (
        <button key={tool.name} aria-label={tool.name} className="flex items-center gap-px">
          <Icon className="size-3">{tool.art}</Icon>
          {tool.menu && <Caret className="text-[#333]" />}
        </button>
      ))}
    </div>
  );
}

const playback = [
  { name: '转到开头', d: 'M1 1v8M9 1v8L2.500 5z' },
  { name: '上一步', d: 'M7 1v8L0 5zM8.500 3v4' },
  { name: '播放', d: 'M1.500 0v10L9.500 5z' },
  { name: '下一步', d: 'M3 1v8l7-4zM1.500 3v4' },
  { name: '转到结尾', d: 'M9 1v8M1 1v8l6.500-4z' },
];

function Timeline() {
  return (
    <footer className="flex h-9 shrink-0 items-center border-t border-[#e4e4e4] bg-[#f0f0f0] pl-1.5 pr-[9px] pb-0.5 text-[#666]">
      <div className="flex gap-2">
        {playback.map((p) => (
          <button key={p.name} aria-label={p.name}>
            <svg viewBox="0 0 10 10" className="size-[10px]"><path d={p.d} fill="currentColor" stroke="currentColor" strokeWidth="1.200" /></svg>
          </button>
        ))}
      </div>
      <svg viewBox="0 1 40 28" className="ml-[11px] h-7 w-10" fill="none" role="img" aria-label="时间轴">
        <path d="M2 3h31v4H2z" fill="#e592e2" />
        <Mesh t="translate(3 9) scale(.55)" />
        <path d="m11 8 .8 1.700 1.900-.5-.9 1.700 1.700.8-1.900.5.3 1.800-1.600-1-1.500 1 .3-1.800-1.800-.6 1.700-.8-.8-1.700 1.900.5z" fill="#ff9f1c" />
        <Mesh t="translate(20 7.500) scale(.35)" />
        <path d="M26.500 13.500v4c0 1.500 5 1.500 5 0v-4z" fill="#e8e8e8" stroke="#999" strokeWidth=".7" />
        <ellipse cx="29" cy="13.500" rx="2.500" ry="1" fill="#fff" stroke="#999" strokeWidth=".6" />
        <path d="M21 16.500v2.500h3" stroke="#555" strokeWidth=".8" />
        <path d="M9.500 21v4.500h16V21" stroke="#bbb" />
        <path d="M34 6v20" stroke="#666" strokeWidth="1.500" />
        <path d="M30 4h8v3l-3 4h-2l-3-4z" fill="#666" />
      </svg>
      <button aria-label="时间轴设置" className="ml-auto">
        <Gear className="size-3 text-[#777]" />
      </button>
    </footer>
  );
}

export default function App() {
  return (
    <div className="flex h-screen min-w-[900px] flex-col overflow-hidden bg-white font-['Open_Sans','Noto_Sans_CJK_SC',sans-serif]">
      <TitleBar />
      <DocumentBar />
      <Ribbon />
      <main className="relative flex min-h-0 flex-1 flex-col justify-between">
        <Wing />
        <ViewCube />
        <div className="relative pl-[3px] pt-1">
          <Browser />
        </div>
        <div className="relative grid grid-cols-[1fr_auto_1fr] items-center pb-0.5 pl-[3px]">
          <Panel title="注释" action="展开注释" />
          <NavBar />
        </div>
      </main>
      <Timeline />
    </div>
  );
}
